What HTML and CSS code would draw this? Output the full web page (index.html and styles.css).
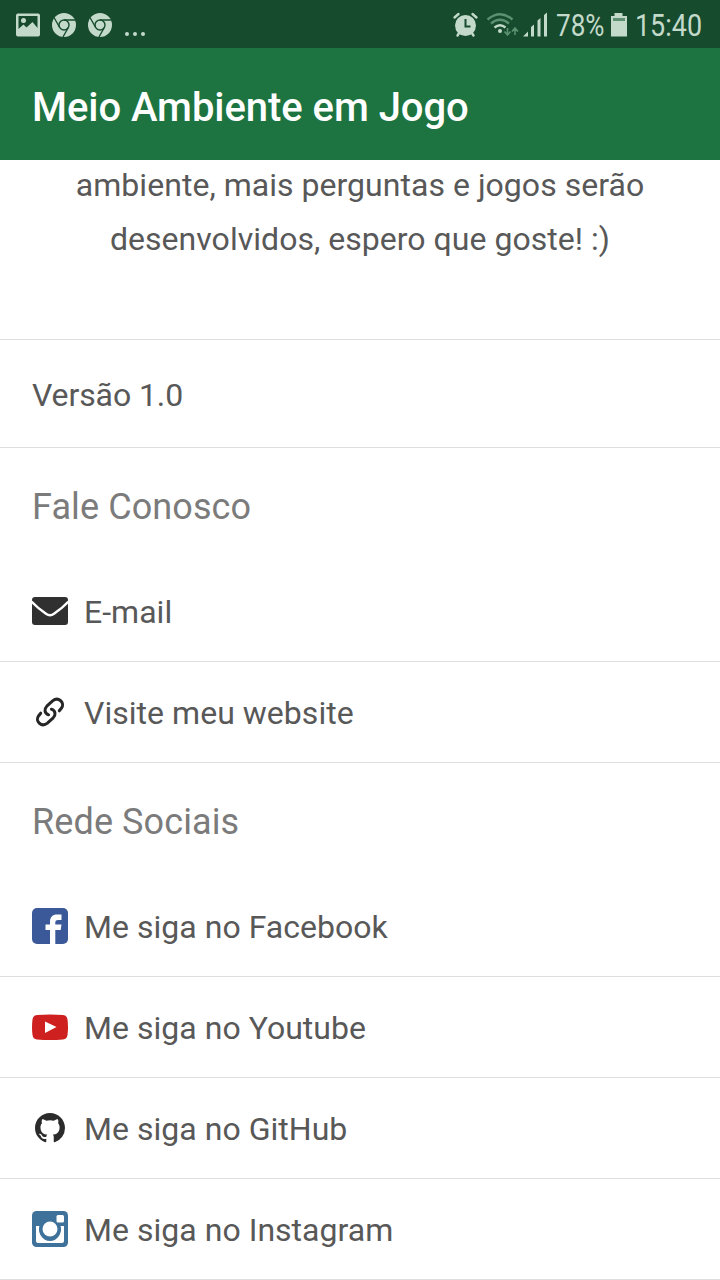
FILE: index.html
```html
<!DOCTYPE html>
<html lang="pt-BR">
<head>
<meta charset="utf-8">
<title>Meio Ambiente em Jogo</title>
<link rel="stylesheet" href="styles.css">
</head>
<body>
<div class="status">
  <svg class="status-icons" width="150" height="48" viewBox="0 0 150 48">
    <path fill="#c3dacb" fill-rule="evenodd" d="M18 13.500h20a2 2 0 0 1 2 2v19a2 2 0 0 1-2 2H18a2 2 0 0 1-2-2v-19a2 2 0 0 1 2-2zM18.500 16v13l5-4.500 3 3 6-5.500 5 6V16z"/>
    <circle cx="23.500" cy="20.500" r="2.500" fill="#c3dacb"/>
    <path fill="#c3dacb" d="M18 29.500l5.500-4 4 3 5-5 5.500 5v6H18z"/>
    <g id="browser">
      <circle cx="64" cy="25" r="12" fill="#c3dacb"/>
      <g fill="none" stroke="#174b2d" stroke-width="1.400"><circle cx="64" cy="25" r="5"/><path d="M64 20h11M59.700 27.500L54 17.500M68.300 27.500L63 37"/></g>
    </g>
    <use href="#browser" x="36"/>
    <g fill="#c3dacb"><circle cx="127" cy="34" r="2"/><circle cx="135" cy="34" r="2"/><circle cx="143" cy="34" r="2"/></g>
  </svg>
  <div class="status-right">
    <svg width="96" height="48" viewBox="452 0 96 48">
      <g fill="none" stroke="#c3dacb" stroke-linecap="round">
        <circle cx="465.500" cy="25.500" r="10.500" fill="#c3dacb" stroke="none"/>
        <path stroke-width="2.400" d="M454.500 17.500l4-3.500M476.500 17.500l-4-3.500M457.500 35.500l2-3M473.500 35.500l-2-3"/>
        <path stroke="#174b2d" stroke-width="2" stroke-linecap="butt" d="M465.500 19v7.500h5"/>
        <g stroke-width="2.300" stroke-linecap="butt">
          <path stroke="#5b9070" d="M487.500 19.500q12.500-10.500 25 0M491 23.500q9-7.500 18 0"/>
          <path d="M494.500 27.500q5.500-4.500 11 0"/>
        </g>
        <circle cx="500" cy="31" r="2" fill="#c3dacb" stroke="none"/>
        <path stroke="#5b9070" stroke-width="1.600" stroke-linecap="butt" d="M507.500 28v7M504.500 31.500l3 3.500 3-3.500M515 35v-7M512 31.500l3-3.500 3 3.500"/>
      </g>
      <path fill="#c3dacb" d="M523 36.500l5-5v5zM531 36.500V27l3-2.500v12zM537.500 36.500V20.500l3-2.500v18.500zM544 36.500V15l3-2.500v24z"/>
    </svg>
    <svg class="battery-text" width="50" height="48"><text x="0" y="36" textLength="48.500" lengthAdjust="spacingAndGlyphs">78%</text></svg>
    <svg class="battery" width="17" height="48" viewBox="0 0 17 48"><path fill="#c3dacb" d="M1 16h3.500v-3h8v3H17v20.500H1z"/><path fill="#5b9070" d="M3 18h12v3H3z"/></svg>
    <svg class="clock" width="68" height="48"><text x="0" y="36" textLength="67" lengthAdjust="spacingAndGlyphs">15:40</text></svg>
  </div>
</div>
<header class="toolbar"><h1>Meio Ambiente em Jogo</h1></header>
<main>
  <p class="intro">ambiente, mais perguntas e jogos serão<br>desenvolvidos, espero que goste! :)</p>
  <div class="version">Versão 1.0</div>
  <h2>Fale Conosco</h2>
  <div class="row">
    <svg viewBox="0 0 36 36"><path fill="#303030" d="M3 4h30q3 0 3 3v22q0 3-3 3H3q-3 0-3-3V7q0-3 3-3z"/><path fill="none" stroke="#fff" stroke-width="2.500" d="M-.5 8.500Q5 14.500 14 20.800q4 3 8 0Q31 14.500 36.500 8.500"/></svg>
    <span>E-mail</span>
  </div>
  <div class="row">
    <svg viewBox="0 0 36 36"><g fill="none" stroke="#262626" stroke-width="3" stroke-linecap="round"><path id="link-half" d="M16.600 20.800C12.300 19.300 12 15 14.800 12.200L20.600 6.900C26.200 2.300 33.600 8.600 29.300 14.300L27.300 16.800"/><use href="#link-half" transform="rotate(180 18 18)"/></g></svg>
    <span>Visite meu website</span>
  </div>
  <h2>Rede Sociais</h2>
  <div class="row">
    <svg viewBox="0 0 36 36"><rect width="36" height="36" rx="5" fill="#3b5998"/><path fill="#fff" d="M18 36V22h-4.500v-5.500H18V14c0-5 2.500-7.500 7-7.500h4.500V12h-3c-2.500 0-3.200.8-3.200 2.500v2h6.200l-.8 5.500h-5.400v14z"/></svg>
    <span>Me siga no Facebook</span>
  </div>
  <div class="row">
    <svg viewBox="0 0 36 36"><path fill="#cd201f" d="M5 6q13-1 26 0 4 .3 4.500 4.500 1 8 0 15.500Q35 30 31 30.500q-13 1-26 0Q1 30 .5 26q-1-8 0-15.500Q1 6.300 5 6z"/><path fill="#fff" d="M13 12.500v11.500l11.500-6z"/></svg>
    <span>Me siga no Youtube</span>
  </div>
  <div class="row">
    <svg viewBox="0 0 36 36"><path fill="#2b2b2b" transform="translate(3 3) scale(1.875)" d="M8 0C3.580 0 0 3.580 0 8c0 3.540 2.290 6.530 5.470 7.590.4.070.55-.17.55-.38 0-.19-.01-.82-.01-1.490-2.010.37-2.530-.49-2.690-.94-.09-.23-.48-.94-.82-1.130-.28-.15-.68-.52-.01-.53.63-.01 1.080.58 1.230.82.72 1.210 1.870.87 2.330.66.070-.52.28-.87.51-1.070-1.780-.2-3.640-.89-3.640-3.950 0-.87.31-1.590.82-2.150-.08-.2-.36-1.020.08-2.120 0 0 .67-.21 2.200.82a7.600 7.600 0 0 1 4 0c1.530-1.040 2.200-.82 2.200-.82.44 1.100.16 1.920.08 2.120.51.56.82 1.270.82 2.150 0 3.070-1.870 3.750-3.650 3.950.29.25.54.73.54 1.480 0 1.070-.01 1.930-.01 2.200 0 .21.15.46.55.38A8.010 8.010 0 0 0 16 8c0-4.420-3.580-8-8-8z"/></svg>
    <span>Me siga no GitHub</span>
  </div>
  <div class="row">
    <svg viewBox="0 0 36 36"><rect width="36" height="36" rx="4.500" fill="#3f729b"/><path fill="#fff" d="M4 15h4.500a10.500 10.500 0 1 0 19 0H32v15q0 2-2 2H6q-2 0-2-2z"/><circle cx="18" cy="18" r="11" fill="#3f729b"/><circle cx="18" cy="18" r="7.500" fill="#fff"/><rect x="24.500" y="4" width="7.500" height="7.500" rx="1.500" fill="#fff"/></svg>
    <span>Me siga no Instagram</span>
  </div>
</main>
</body>
</html>
```
FILE: styles.css
```css
* { box-sizing: border-box; }
body { margin: 0; width: 720px; height: 1280px; overflow: hidden; background: #fff; color: #585858; font-family: Roboto, sans-serif; font-size: 32px; letter-spacing: .03px; }
svg { display: block; flex: none; overflow: visible; }
.status { height: 48px; display: flex; justify-content: space-between; background: #174b2d; padding-right: 17px; }
.status-right { display: flex; }
.status text { font-size: 31px; fill: #c3dacb; letter-spacing: 0; }
.battery-text { margin-left: 8px; }
.battery { margin-left: 4px; }
.clock { margin-left: 8px; }
.toolbar { height: 112px; display: flex; align-items: center; padding: 6px 32px 0; background: #1d7440; }
h1 { margin: 0; color: #fff; font-size: 40px; font-weight: 500; letter-spacing: -.05px; }
main { display: flow-root; }
.intro { display: flow-root; margin: 0; height: 180px; line-height: 54px; text-align: center; border-bottom: 1px solid #dedede; }
.intro::before { content: ""; display: block; margin-top: -2px; }
.version { height: 108px; padding: 2px 32px 0; display: flex; align-items: center; border-bottom: 1px solid #dedede; letter-spacing: -.1px; }
h2 { margin: 0; height: 113px; padding: 4px 32px 0; display: flex; align-items: center; font-size: 36px; font-weight: 400; color: #7b7b7b; letter-spacing: .1px; }
.row { height: 101px; padding: 0 32px; display: flex; align-items: center; gap: 16px; border-bottom: 1px solid #dedede; }
.row svg { width: 36px; height: 36px; overflow: hidden; }
.row span { padding-top: 2px; }
```
